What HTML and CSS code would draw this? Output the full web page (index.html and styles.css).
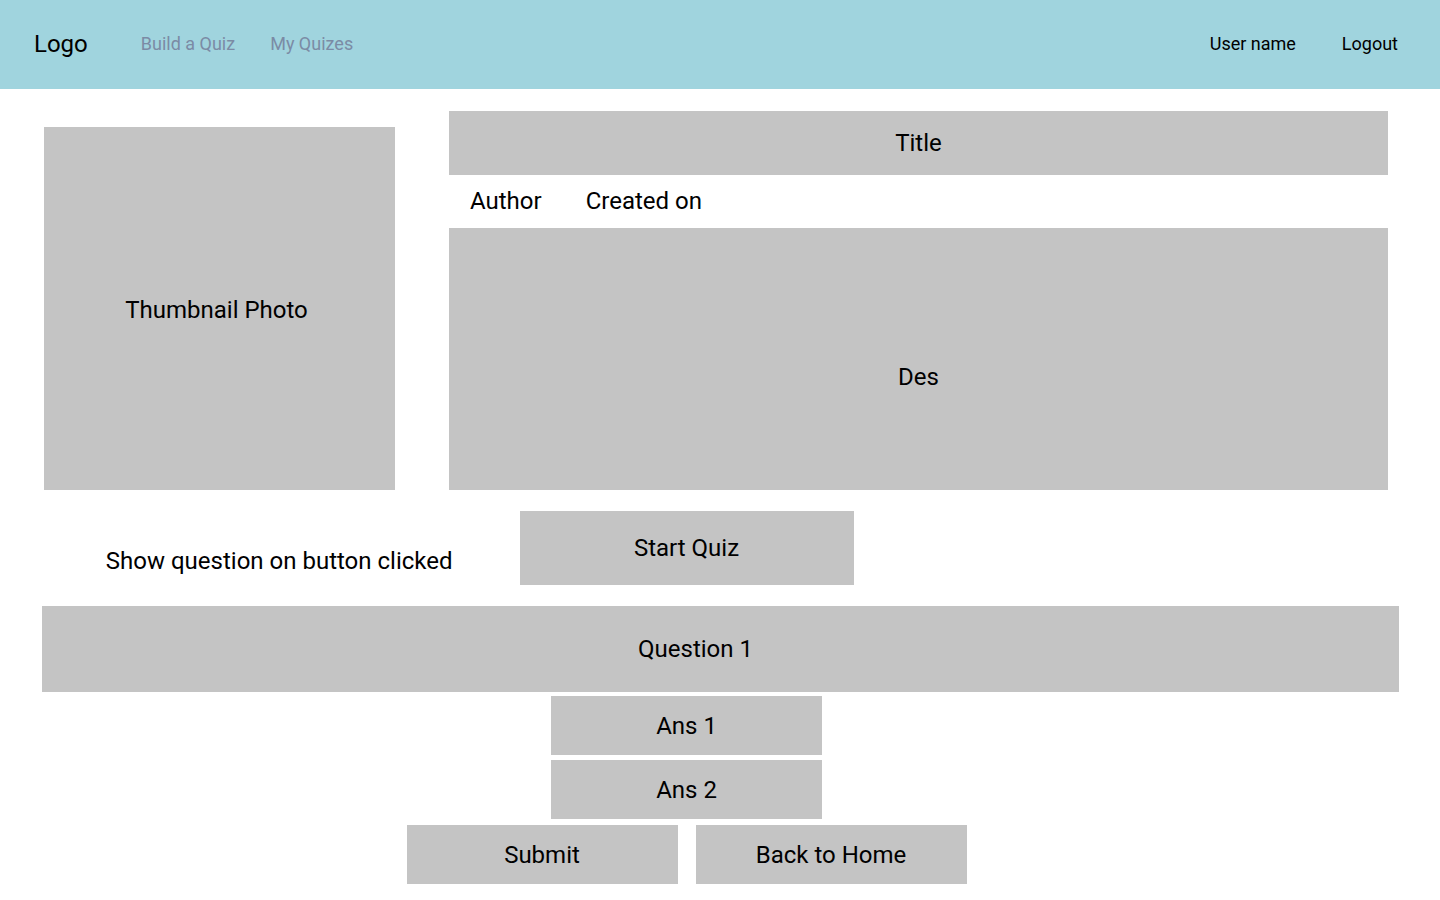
FILE: index.html
```html
<!DOCTYPE html>
<html lang="en">
<head>
<meta charset="utf-8">
<meta name="viewport" content="width=device-width, initial-scale=1">
<title>Quiz</title>
<link rel="stylesheet" href="styles.css">
</head>
<body>
<header class="topbar">
  <a class="logo" href="#">Logo</a>
  <nav class="nav">
    <a href="#">Build a Quiz</a>
    <a href="#">My Quizes</a>
  </nav>
  <div class="account">
    <span>User name</span>
    <a href="#">Logout</a>
  </div>
</header>
<main>
  <section class="overview">
    <div class="block thumbnail">Thumbnail Photo</div>
    <div class="details">
      <h1 class="block title">Title</h1>
      <div class="meta">
        <span>Author</span>
        <span>Created on</span>
      </div>
      <p class="block description">Des</p>
    </div>
  </section>
  <section class="quiz">
    <div class="start-row">
      <p class="note">Show question on button clicked</p>
      <button class="block start" type="button">Start Quiz</button>
    </div>
    <h2 class="block question">Question 1</h2>
    <div class="answers">
      <button class="block choice" type="button">Ans 1</button>
      <button class="block choice" type="button">Ans 2</button>
    </div>
    <div class="actions">
      <button class="block choice" type="button">Submit</button>
      <button class="block choice" type="button">Back to Home</button>
    </div>
  </section>
</main>
</body>
</html>
```
FILE: styles.css
```css
* {
  box-sizing: border-box;
}

body {
  margin: 0;
  background: #fff;
  color: #000;
  font: 400 24px/28px Roboto, sans-serif;
}

h1,
h2,
p {
  margin: 0;
  font: inherit;
}

a {
  color: inherit;
  text-decoration: none;
}

button {
  border: 0;
  color: inherit;
  font: inherit;
  cursor: pointer;
}

.topbar {
  display: flex;
  align-items: center;
  min-height: 89px;
  padding: 0 42px 2px 34px;
  background: #a0d4de;
}

.nav,
.account {
  display: flex;
  font-size: 18px;
}

.nav {
  gap: 35px;
  margin-left: 53px;
  color: #7b8ba5;
}

.account {
  gap: 46px;
  margin-left: auto;
}

.block {
  display: flex;
  align-items: center;
  justify-content: center;
  padding: 0;
  background: #c4c4c4;
}

.overview {
  display: flex;
  gap: 54px;
  padding: 22px 52px 0 44px;
}

.thumbnail {
  flex: 0 0 351px;
  margin-top: 16px;
  padding: 2px 6px 0 0;
}

.details {
  flex: 1;
}

.title {
  min-height: 64px;
}

.meta {
  display: flex;
  align-items: center;
  gap: 44px;
  min-height: 53px;
  padding: 0 0 2px 21px;
}

.description {
  min-height: 262px;
  padding-top: 36px;
}

.quiz {
  padding: 21px 41px 16px 42px;
}

.start-row,
.answers,
.actions {
  padding-right: 68px;
}

.start-row {
  display: grid;
  grid-template-columns: 1fr 334px 1fr;
  align-items: center;
}

.note {
  padding: 26px 67px 0 0;
  text-align: right;
}

.start {
  min-height: 74px;
}

.question {
  min-height: 86px;
  margin-top: 21px;
  padding-right: 50px;
}

.answers {
  display: flex;
  flex-direction: column;
  align-items: center;
  gap: 5px;
  margin-top: 4px;
}

.actions {
  display: flex;
  justify-content: center;
  gap: 18px;
  margin-top: 6px;
}

.choice {
  width: 271px;
  min-height: 59px;
}
```
